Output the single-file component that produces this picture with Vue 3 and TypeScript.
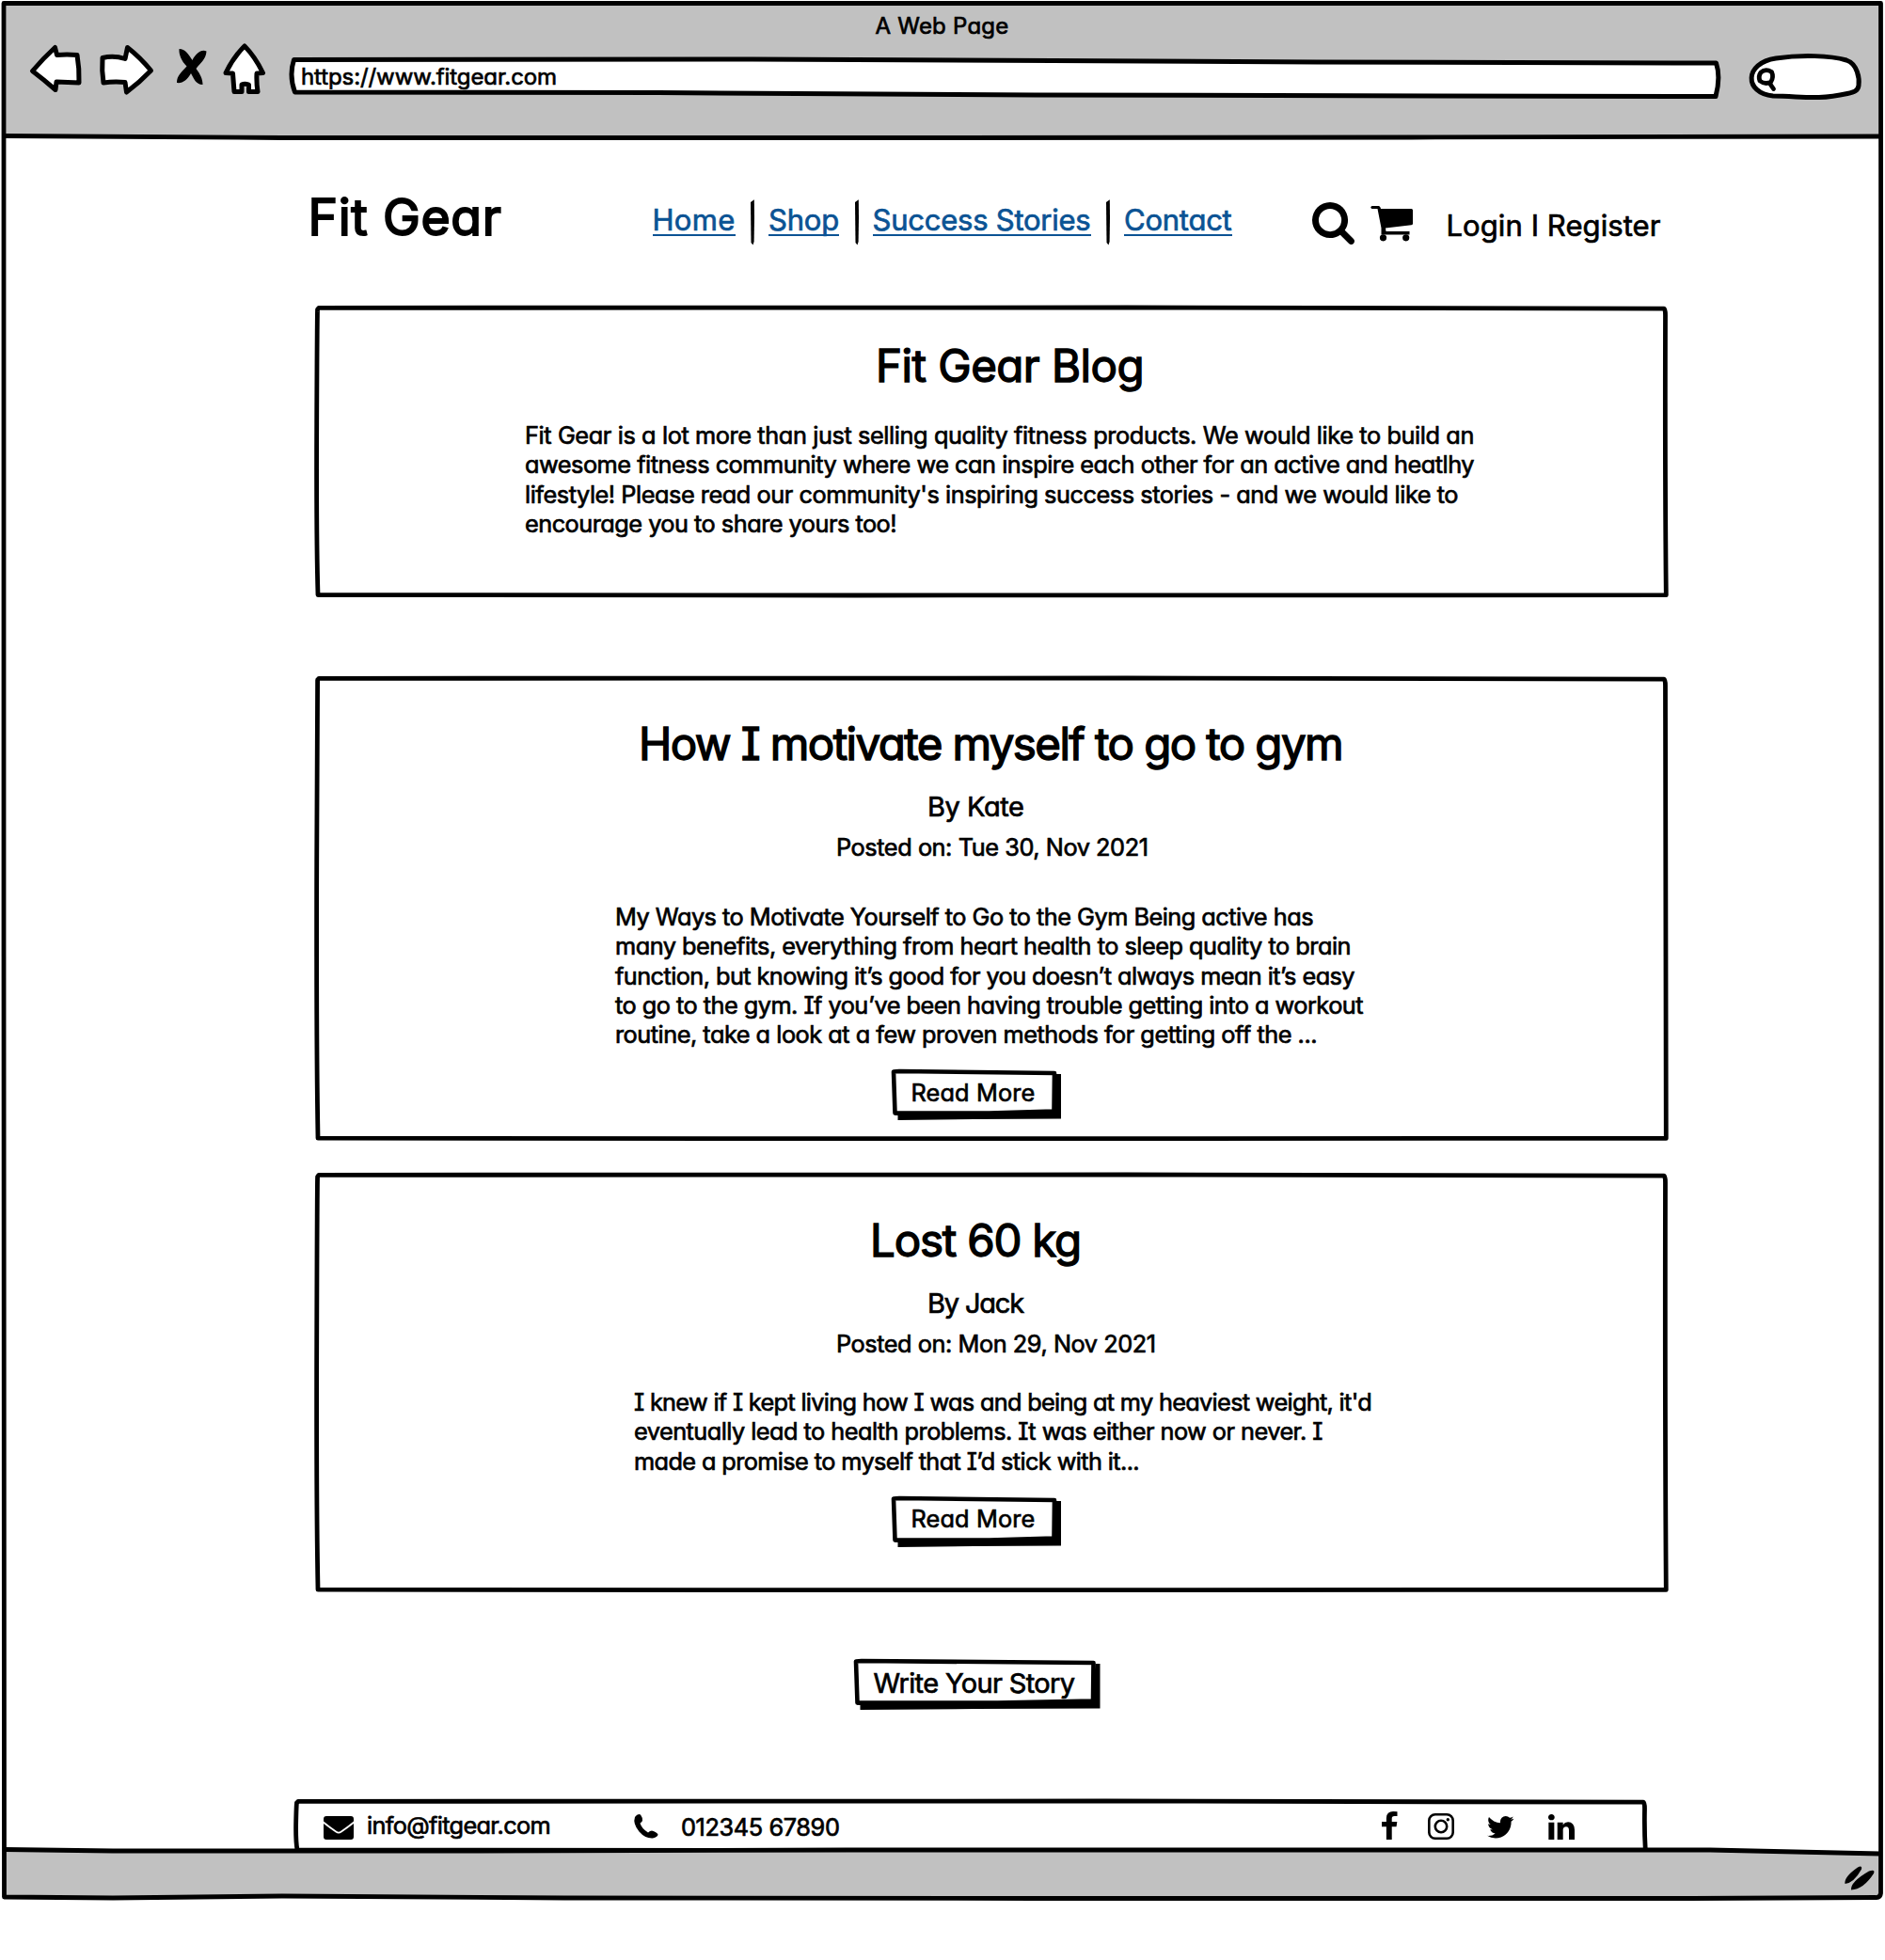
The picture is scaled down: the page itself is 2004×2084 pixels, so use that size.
<script setup lang="ts">
import type { Directive } from 'vue'

// Spreads the letters of a single line so that it takes the given width.
const fit = (el: HTMLElement, width: number) => {
  el.style.letterSpacing = '0px'
  const natural = el.getBoundingClientRect().width
  const count = (el.textContent ?? '').length
  el.style.letterSpacing = `${(width - natural) / count}px`
}
const vFit: Directive<HTMLElement, number> = {
  mounted: (el, binding) => fit(el, binding.value),
}

interface Line { text: string; width: number }
interface Story {
  title: Line; titleX: number
  author: Line; date: Line
  lines: Line[]; bodyX: number; bodyGap: number; height: number
}

const links: Line[] = [
  { text: 'Home', width: 88 },
  { text: 'Shop', width: 75 },
  { text: 'Success Stories', width: 232 },
  { text: 'Contact', width: 114.5 },
]

const intro: Line[] = [
  { text: 'Fit Gear is a lot more than just selling quality fitness products. We would like to build an', width: 1009 },
  { text: 'awesome fitness community where we can inspire each other for an active and heatlhy', width: 1009 },
  { text: "lifestyle! Please read our community's inspiring success stories - and we would like to", width: 992 },
  { text: 'encourage you to share yours too!', width: 395 },
]

const stories: Story[] = [
  {
    title: { text: 'How I motivate myself to go to gym', width: 748 }, titleX: 342,
    author: { text: 'By Kate', width: 102.5 },
    date: { text: 'Posted on: Tue 30, Nov 2021', width: 331.5 },
    bodyX: 317, bodyGap: 42.5, height: 489.7,
    lines: [
      { text: 'My Ways to Motivate Yourself to Go to the Gym Being active has', width: 742 },
      { text: 'many benefits, everything from heart health to sleep quality to brain', width: 782 },
      { text: 'function, but knowing it’s good for you doesn’t always mean it’s easy', width: 786 },
      { text: 'to go to the gym. If you’ve been having trouble getting into a workout', width: 795 },
      { text: 'routine, take a look at a few proven methods for getting off the ...', width: 746 },
    ],
  },
  {
    title: { text: 'Lost 60 kg', width: 224 }, titleX: 588,
    author: { text: 'By Jack', width: 102 },
    date: { text: 'Posted on: Mon 29, Nov 2021', width: 339.5 },
    bodyX: 337, bodyGap: 30.5, height: 441.7,
    lines: [
      { text: "I knew if I kept living how I was and being at my heaviest weight, it'd", width: 784 },
      { text: 'eventually lead to health problems. It was either now or never. I', width: 732 },
      { text: 'made a promise to myself that I’d stick with it...', width: 537 },
    ],
  },
]

// Slightly uneven rectangle, as if drawn with a marker.
const box = (w: number, h: number) =>
  `M2 0.3 Q${w * 0.3} 0 ${w * 0.6} 0 T${w - 2} 1.2 Q${w - 0.5} 2 ${w - 0.5} 8 ` +
  `Q${w - 1} ${h * 0.6} ${w + 0.3} ${h - 0.3} Q${w * 0.7} ${h + 0.6} ${w * 0.4} ${h} L1 ${h - 0.5} ` +
  `Q-0.8 ${h * 0.8} -0.3 ${h * 0.4} T0.6 2Z`
const buttonFace = (w: number) => `M2 2.5L8 2L${w} 4L${w - 0.5} 44.5L${w * 0.6} 46.5L3.5 46.5Z`
const buttonShade = (w: number) => `M${w} 5H${w + 5}V52.5L${w * 0.5} 53L6.5 54V49L3 48.5V44H${w - 3}Z`
</script>

<template>
  <div class="window">
    <header class="chrome">
      <div class="page-title"><span v-fit="142">A Web Page</span></div>
      <div class="toolbar">
        <svg class="back" viewBox="28 42 62 66" width="62" height="66"><path class="arrow" d="M34.500 75.500Q46 62 58.500 50.500L60.500 58.500Q71 57.500 82 58.500Q84.500 73 84 88L60 87L59 95.500Q47 85 34.500 75.500Z" /></svg>
        <svg class="forward" viewBox="104 42 62 66" width="62" height="66"><path class="arrow" d="M109 61.500Q121 58.500 133 62.500L135.500 50.500Q149 61 160.500 75Q148 88 134.500 98L133 87.500Q121 86.500 110 88Q108 75 109 61.500Z" /></svg>
        <svg class="stop" viewBox="186 42 36 66" width="36" height="66"><path d="M190.500 52C197 52 200 57 204.500 64C208 57 214 52 219.500 54.500C219 63 213 67 208.500 73C213 79 215.500 84 215.500 90C208 90 206 83 203 78C199 85 194 89 188 88C188 80 193 77 198.500 70.500C193 65 190 58 190.500 52Z" /></svg>
        <svg class="home" viewBox="236 42 48 66" width="48" height="66"><path class="arrow" d="M260 49Q271 60 279.500 77.500L273 78Q272.500 88 274 97.500H264.500V90Q260 88.500 257 90V97.500H249L247.500 78L240 77.500Q248 61 260 49Z" /></svg>
        <div class="address">
          <svg viewBox="306 42 1526 66" width="1526" height="66"><path class="field" d="M312.500 63.500L800 63L1400 66L1824.500 67Q1829.500 82 1824 102.500L1100 101L700 98.500L313.500 98Q307 80 312.500 63.500Z" /></svg>
          <span v-fit="272">https://www.fitgear.com</span>
        </div>
        <svg class="search" viewBox="1858 42 122 66" width="122" height="66">
          <path class="field" d="M1885 102C1854 99 1854 67 1888 62C1915 58 1946 59 1963 64C1975 68 1977 84 1976 91C1975 97 1971 98 1964 99.500C1930 107 1915 102 1885 102Z" />
          <path class="lens" d="M1872 77Q1877 72.500 1883.500 76.500Q1886 82 1882.500 87.500Q1876 90 1871 86Q1869 81 1872 77ZM1881 88L1885.500 94.500" />
        </svg>
      </div>
    </header>

    <main class="page">
      <div class="masthead">
        <div class="logo"><span v-fit="206">Fit Gear</span></div>
        <nav class="links">
          <template v-for="(link, i) in links" :key="link.text">
            <svg v-if="i" class="divider" viewBox="0 0 6 49" width="6" height="49"><path d="M1 3L4.800 .3L5 20L4.600 45L3.500 48.500L1.500 46Z" /></svg>
            <a><span v-fit="link.width">{{ link.text }}</span></a>
          </template>
        </nav>
        <svg class="find" viewBox="64 128 1664 1664" width="45" height="45" preserveAspectRatio="none"><path d="M1216 832q0-185-131.500-316.500t-316.500-131.500-316.500 131.500-131.500 316.500 131.500 316.500 316.500 131.500 316.500-131.500 131.500-316.500zm512 832q0 52-38 90t-90 38q-54 0-90-38l-343-342q-179 124-399 124-143 0-273.500-55.500t-225-150-150-225-55.500-273.500 55.500-273.500 150-225 225-150 273.500-55.500 273.500 55.500 225 150 150 225 55.500 273.500q0 220-124 399l343 343q37 37 37 90z" /></svg>
        <svg class="cart" viewBox="1457 219 46 38" width="46" height="38"><path d="M1458.500 219H1466Q1467.500 219.500 1468 222H1500.500Q1502 222 1502 223.500V238Q1502 239 1500.500 239.300L1473 242.500L1473.500 246H1498.500V249.500H1468.500V242.500L1464.500 222H1458.500Q1456 220.500 1458.500 219Z" /><circle cx="1470.500" cy="252.800" r="3.600" /><circle cx="1494.700" cy="252.800" r="3.600" /></svg>
        <div class="account"><span v-fit="228">Login I Register</span></div>
      </div>

      <section class="card intro">
        <svg class="outline" viewBox="0 0 1434 306" width="1434" height="306"><path :d="box(1434, 306)" /></svg>
        <h1><span v-fit="285">Fit Gear Blog</span></h1>
        <p><span v-for="l in intro" :key="l.text" class="line"><span v-fit="l.width">{{ l.text }}</span></span></p>
      </section>

      <article v-for="s in stories" :key="s.title.text" class="card story" :style="{ height: `${s.height}px` }">
        <svg class="outline" :viewBox="`0 0 1434 ${s.height}`" width="1434" :height="s.height"><path :d="box(1434, s.height)" /></svg>
        <h2 :style="{ marginLeft: `${s.titleX}px` }"><span v-fit="s.title.width">{{ s.title.text }}</span></h2>
        <div class="author"><span v-fit="s.author.width">{{ s.author.text }}</span></div>
        <div class="date"><span v-fit="s.date.width">{{ s.date.text }}</span></div>
        <p :style="{ marginLeft: `${s.bodyX}px`, marginTop: `${s.bodyGap}px` }">
          <span v-for="l in s.lines" :key="l.text" class="line"><span v-fit="l.width">{{ l.text }}</span></span>
        </p>
        <button class="more" type="button">
          <svg viewBox="0 0 181 55" width="181" height="55"><path class="shade" :d="buttonShade(175)" /><path class="face" :d="buttonFace(173)" /></svg>
          <span v-fit="132">Read More</span>
        </button>
      </article>

      <button class="write" type="button">
        <svg viewBox="0 0 263 55" width="263" height="55"><path class="shade" :d="buttonShade(256.5)" /><path class="face" :d="buttonFace(254.5)" /></svg>
        <span v-fit="214">Write Your Story</span>
      </button>

      <footer class="contact">
        <svg class="outline" viewBox="0 0 1434 52.500" width="1434" height="52.500"><path :d="box(1434, 52.5)" /></svg>
        <svg class="mail" viewBox="0 0 32 25" width="32" height="25"><path d="M3 0H29Q32 0 32 3V5.500Q24 12 18 16Q16 17.500 14 16Q8 12 0 5.500V3Q0 0 3 0ZM0 8Q7 13.500 13 17.500Q16 19.500 19 17.500Q25 13.500 32 8V22Q32 25 29 25H3Q0 25 0 22Z" /></svg>
        <span class="email"><span v-fit="195">info@fitgear.com</span></span>
        <svg class="phone" viewBox="0 0 26 26" width="26" height="26"><path d="M1 3Q4-1 7 .5Q9.500 4 9 7Q8 8.500 6.500 9.500Q8 15 15 19.500Q17 17.500 19 17.500Q24 19 25.500 21.500Q25.500 24 20 25.500Q12 26 5.500 18.500Q-1.500 10 1 3Z" /></svg>
        <span class="tel"><span v-fit="168.5">012345 67890</span></span>
        <svg class="fb" viewBox="479 0 864 1664" width="16.500" height="30" preserveAspectRatio="none"><path d="M1343 12v264h-157q-86 0-116 36t-30 108v189h293l-39 296h-254v759h-306v-759h-255v-296h255v-218q0-186 104-288.500t277-102.500q147 0 228 12z" /></svg>
        <svg class="ig" viewBox="0 0 28 28" width="28" height="28"><rect x="1.300" y="1.300" width="25.400" height="25.400" rx="6.500" /><circle cx="14" cy="14" r="6.200" /><circle class="dot" cx="21.300" cy="6.700" r="1.700" /></svg>
        <svg class="tw" viewBox="108 256 1576 1280" width="28.500" height="23.500" preserveAspectRatio="none"><path d="M1684 408q-67 98-162 167 1 14 1 42 0 130-38 259.500t-115.500 248.500-184.500 210.500-258 146-323 54.500q-271 0-496-145 35 4 78 4 225 0 401-138-105-2-188-64.500t-114-159.500q33 5 61 5 43 0 85-11-112-23-185.500-111.500t-73.500-205.500v-4q68 38 146 41-66-44-105-115t-39-154q0-88 44-163 121 149 294.500 238.500t371.500 99.500q-8-38-8-74 0-134 94.500-228.500t228.500-94.500q140 0 236 102 109-21 205-78-37 115-142 178 93-10 186-50z" /></svg>
        <svg class="in" viewBox="128 148 1536 1468" width="28" height="27" preserveAspectRatio="none"><path d="M477 625v991h-330v-991h330zm21-306q1 73-50.500 122t-135.500 49h-2q-82 0-132-49t-50-122q0-74 51.500-122.500t134.500-48.500 133 48.500 51 122.500zm1166 729v568h-329v-530q0-105-40.500-164.500t-126.500-59.500q-63 0-105.500 34.500t-63.500 85.500q-11 30-11 81v553h-329q2-399 2-647t-1-296l-1-48h329v144h-2q20-32 41-56t56.500-52 87-43.500 114.500-15.500q171 0 275 113.500t104 332.500z" /></svg>
      </footer>
    </main>

    <svg class="frame" viewBox="0 0 2004 2084" width="2004" height="2084">
      <path class="bar" d="M4 3.500H1999.500L1998 145L1000 146.500H300L4 144.500Z" />
      <path class="bar" d="M5 1966.500L1000 1967H1818L1999 1971V2018H5Z" />
      <path class="rule" d="M4 3.500H1999.500L2000 1000L1999.500 2013Q1999 2018 1994 2017.500L1800 2018.500H1100L600 2018L300 2016L120 2018L4.500 2017L4 1000Z" />
      <path class="rule" d="M4 144.500L300 146.500H1000L1500 146L1998 145M5 1966.500L120 1968H500L900 1967H1818L1999 1971" />
      <path class="grip" d="M1961.500 2003Q1960 1996 1975 1985.500Q1980 1983 1979 1987.500Q1971 2002 1961.500 2003ZM1968 2009.500Q1967 2001 1987 1989.500Q1994 1987 1992 1992Q1981 2009 1968 2009.500Z" />
    </svg>
  </div>
</template>

<style>
body { background: #fff; }
</style>

<style scoped>
.window {
  position: relative;
  display: flex;
  flex-direction: column;
  width: 2004px;
  height: 2084px;
  overflow: hidden;
  color: #000;
  font-family: Inter, "Liberation Sans", sans-serif;
  font-size: 25.3px;
  font-weight: 400;
  font-feature-settings: "cv11", "cv08", "calt" 0;
  -webkit-text-stroke: 0.7px currentColor;
  stroke-linejoin: round;
  white-space: nowrap;
}
svg { display: block; flex: none; overflow: visible; }
h1, h2, p { margin: 0; font-weight: 400; }

.frame { position: absolute; inset: 0; z-index: -1; }
.rule { fill: none; stroke: #000; stroke-width: 4.8; stroke-linejoin: round; }
.bar { fill: #c1c1c1; }

.chrome { box-sizing: border-box; height: 145px; padding-top: 11.5px; }
.page-title { width: 2003px; font-size: 24px; line-height: 32px; text-align: center; }
.toolbar { display: flex; height: 66px; margin-top: -1.5px; padding-left: 28px; }
.arrow, .field { fill: #fff; stroke: #000; stroke-width: 5; stroke-linejoin: round; }
.forward { margin-left: 14px; }
.stop { margin-left: 20px; }
.home { margin-left: 14px; }
.address {
  position: relative;
  z-index: 0;
  box-sizing: border-box;
  width: 1526px;
  margin-left: 22px;
  padding: 24px 0 0 14px;
  font-size: 24px;
  line-height: 32px;
}
.address svg { position: absolute; inset: 0; z-index: -1; }
.search { margin-left: 26px; }
.lens { fill: none; stroke: #000; stroke-width: 4.8; stroke-linecap: round; }

.page { display: flex; flex-direction: column; align-items: flex-start; }
.masthead { display: flex; align-items: flex-start; height: 182px; padding-left: 327.5px; }
.logo { width: 366px; padding-top: 56px; font-size: 53.5px; line-height: 60px; -webkit-text-stroke-width: 1.9px; }
.links { display: flex; width: 701.5px; padding-top: 67px; font-size: 31px; line-height: 43px; }
.links a {
  height: 37px;
  border-bottom: 2px solid #0b5394;
  color: #0b5394;
}
.divider { margin: 0 14px 0 15.5px; }
.find { margin-top: 70px; }
.cart { margin: 74px 0 0 16.5px; }
.account { padding-top: 74.500px; margin-left: 35px; font-size: 31px; line-height: 40px; font-feature-settings: "cv11", "calt" 0; }

.card { position: relative; width: 1434px; margin-left: 337px; }
.outline { position: absolute; left: 0; top: 0; fill: none; stroke: #000; stroke-width: 4.8; stroke-linejoin: round; z-index: -1; }
.intro { height: 306px; margin-bottom: 88px; }
.story + .story { margin-top: 38.500px; }
h1, h2 { font-size: 47.500px; line-height: 60px; -webkit-text-stroke-width: 1.4px; }
h1 { padding: 32px 0 0 594px; }
h2 { padding-top: 40px; }
.line { display: block; }
p { line-height: 31.250px; }
.intro p { margin: 28px 0 0 221px; }
.author { margin: 16.5px 0 0 649px; font-size: 29px; line-height: 40px; }
.date { margin: 7px 0 0 552px; line-height: 32px; }

button {
  position: relative;
  z-index: 0;
  display: block;
  box-sizing: border-box;
  height: 54px;
  border: 0;
  background: none;
  color: inherit;
  font: inherit;
  font-feature-settings: inherit;
  letter-spacing: inherit;
  text-align: left;
  line-height: 32px;
}
button svg { position: absolute; inset: 0; z-index: -1; }
.face { fill: #fff; stroke: #000; stroke-width: 4.6; }
.more { width: 181px; margin: 21.800px 0 0 610.500px; padding: 8.500px 0 13.500px 21px; }
.write { width: 263px; margin: 73px 0 0 907.500px; padding: 10px 0 12px 21px; font-size: 29px; }

.contact {
  position: relative;
  display: flex;
  align-items: flex-start;
  box-sizing: border-box;
  width: 1434px;
  height: 52.500px;
  margin: 97px 0 0 315px;
  padding-left: 29px;
  line-height: 32px;
}
.mail { margin-top: 16px; }
.email { width: 284px; margin: 10px 0 0 14px; }
.phone { margin-top: 14px; }
.tel { width: 744px; margin: 12.500px 0 0 24px; }
.fb { margin: 11.500px 0 0 1px; }
.ig { margin: 13.500px 0 0 32px; fill: none; stroke: #000; stroke-width: 2.600; }
.ig .dot { fill: #000; stroke: none; }
.tw { margin: 16px 0 0 35.500px; }
.in { margin: 14px 0 0 36px; }
</style>
